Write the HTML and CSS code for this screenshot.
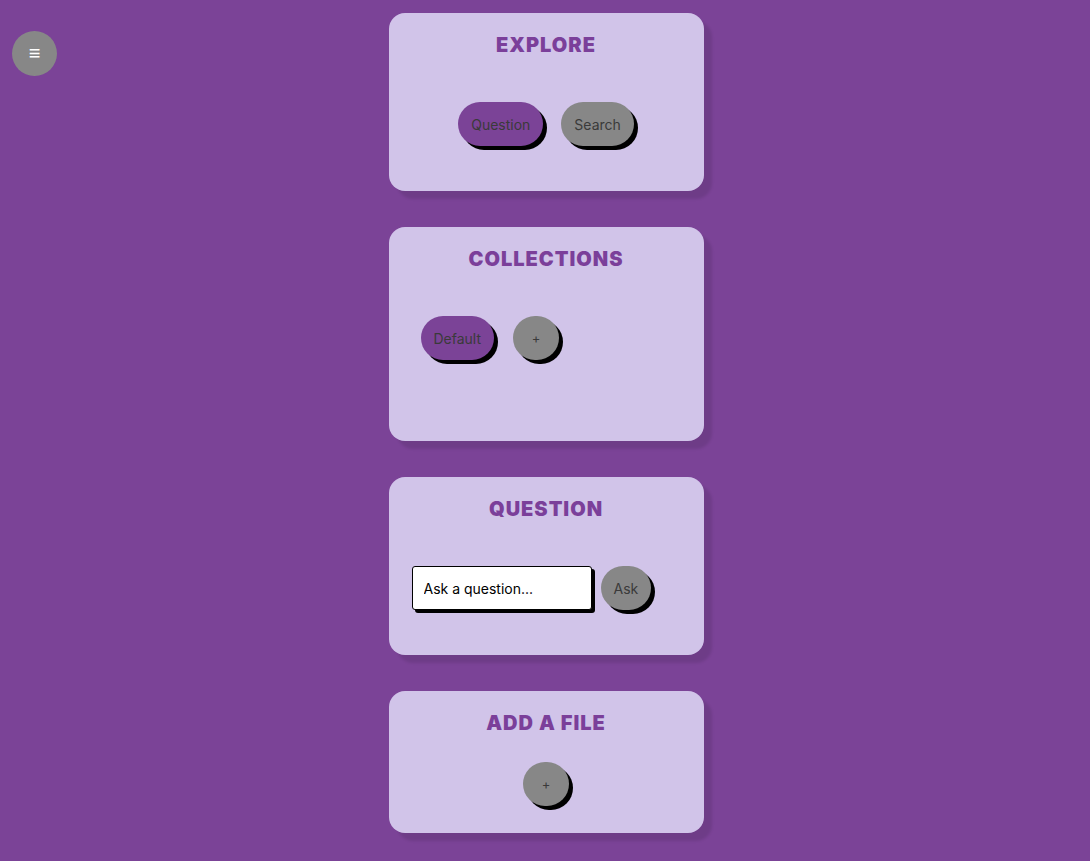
FILE: index.html
```html
<!DOCTYPE html>
<html lang="en">
<head>
    <meta charset="UTF-8">
    <meta name="viewport" content="width=device-width, initial-scale=1.0">
    <title>Explore</title>
    <link rel="stylesheet" href="styles.css">
</head>
<body>

<button class="menu-toggle" aria-label="Menu">&#8801;</button>

<div class="container">
    <div class="card">
        <h2>Explore</h2>
        <div class="row center">
            <button class="button purple">Question</button>
            <button class="button">Search</button>
        </div>
    </div>

    <div class="card collections">
        <h2>Collections</h2>
        <div class="row">
            <button class="button purple">Default</button>
            <button class="button round">+</button>
        </div>
    </div>

    <div class="card">
        <h2>Question</h2>
        <div class="row ask-row">
            <input class="question-input" type="text" value="Ask a question...">
            <button class="button">Ask</button>
        </div>
    </div>

    <div class="card add-file">
        <h2>Add a File</h2>
        <div class="row center">
            <button class="button round">+</button>
        </div>
    </div>
</div>

</body>
</html>
```

FILE: styles.css
```css
body { font-family: Inter, "Noto Sans", sans-serif; margin: 0; padding: 0; background-color: #7b4397; }
.menu-toggle { position: fixed; top: 31px; left: 12px; width: 45px; height: 45px; border-radius: 50%; border: none; background-color: #878787; color: white; font-size: 20px; line-height: 45px; padding: 0; cursor: pointer; }
.container { display: flex; flex-direction: column; align-items: center; gap: 36px; padding: 13px 0 28px; }
.card { width: 315px; box-sizing: border-box; background-color: #d1c4e9; border-radius: 16px; padding: 20px 0; box-shadow: 8px 8px 3px rgba(0, 0, 0, 0.1); margin-left: 2px; }
.card h2 { margin: 0; text-align: center; font-size: 20px; line-height: 24px; font-weight: 900; color: #7b3f9a; text-transform: uppercase; letter-spacing: 1px; }
.row { display: flex; gap: 18px; margin: 45px 0 25px; padding: 0 32px; }
.row.center { justify-content: center; }
.collections .row { margin-bottom: 61px; gap: 19px; }
.ask-row { padding: 0 23px; gap: 9px; }
.add-file .row { margin: 27px 0 7px; }
.button { height: 44px; padding: 0 13px; border: none; border-radius: 22px; background-color: #878787; color: #3a3a3a; font-family: Inter, "Noto Sans", sans-serif; font-size: 14px; box-shadow: 4px 4px 0 #000; cursor: pointer; }
.button.purple { background-color: #7b4397; }
.button.round { width: 46px; padding: 0; font-size: 13px; }
.question-input { width: 180px; height: 44px; box-sizing: border-box; border: 1px solid #000; border-radius: 3px; padding: 0 11px; font-family: Inter, "Noto Sans", sans-serif; font-size: 14px; color: #000; background: white; box-shadow: 3px 3px 0 #000; }
```
